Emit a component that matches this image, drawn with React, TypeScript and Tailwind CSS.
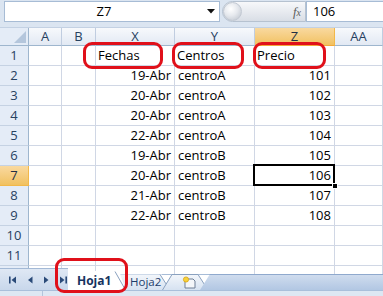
import React from "react";

const FONT = { fontFamily: '"Open Sans", "Liberation Sans", sans-serif' };

type Row = { n: number; x?: string; y?: string; z?: string; head?: boolean };

const rows: Row[] = [
  { n: 1, x: "Fechas", y: "Centros", z: "Precio", head: true },
  { n: 2, x: "19-Abr", y: "centroA", z: "101" },
  { n: 3, x: "20-Abr", y: "centroA", z: "102" },
  { n: 4, x: "20-Abr", y: "centroA", z: "103" },
  { n: 5, x: "22-Abr", y: "centroA", z: "104" },
  { n: 6, x: "19-Abr", y: "centroB", z: "105" },
  { n: 7, x: "20-Abr", y: "centroB", z: "106" },
  { n: 8, x: "21-Abr", y: "centroB", z: "107" },
  { n: 9, x: "22-Abr", y: "centroB", z: "108" },
  { n: 10 },
  { n: 11 },
];

const colHeads = ["A", "B", "X", "Y", "Z", "AA"];

function Cell({
  children,
  align = "left",
  selected = false,
}: {
  children?: React.ReactNode;
  align?: "left" | "right";
  selected?: boolean;
}) {
  return (
    <div
      className={
        "relative h-[20px] border-r border-b border-[#d0d7e5] flex items-end pb-[1px] text-[13px] leading-[17px] text-black whitespace-nowrap " +
        (align === "right" ? "justify-end pr-[3px]" : "justify-start pl-[2px]")
      }
    >
      {children}
      {selected && (
        <>
          <div className="absolute left-[-2px] top-[-2px] right-[-1px] bottom-[-1px] border-2 border-black z-10" />
          <div className="absolute right-[-4px] bottom-[-4px] w-[6px] h-[6px] bg-black border border-white z-10" />
        </>
      )}
    </div>
  );
}

function RowHead({ n, active }: { n: number; active?: boolean }) {
  return (
    <div
      className={
        "h-[20px] border-r border-b flex items-center justify-center text-[13px] " +
        (active
          ? "bg-gradient-to-b from-[#f9d99f] to-[#f1c15f] border-[#f2b84a] text-[#1f2f45]"
          : "bg-[#e4ecf7] border-r-[#9eb6ce] border-b-[#c5d2e3] text-[#27415f]")
      }
    >
      {n}
    </div>
  );
}

function NavArrow({ dir, bar }: { dir: "l" | "r"; bar?: boolean }) {
  return (
    <svg width="10" height="10" viewBox="0 0 10 10" className="shrink-0">
      {dir === "l" ? (
        <>
          {bar && <rect x="1" y="1.5" width="1.6" height="7" fill="#2a4a78" />}
          <polygon points={bar ? "8,1.5 8,8.5 3.5,5" : "7.5,1.5 7.5,8.5 3,5"} fill="#2a4a78" />
        </>
      ) : (
        <>
          <polygon points={bar ? "2,1.5 2,8.5 6.5,5" : "3,1.5 3,8.5 7.5,5"} fill="#2a4a78" />
          {bar && <rect x="7.4" y="1.5" width="1.6" height="7" fill="#2a4a78" />}
        </>
      )}
    </svg>
  );
}

export default function App() {
  return (
    <div
      className="relative w-[383px] h-[296px] overflow-hidden bg-white select-none"
      style={FONT}
    >
      {/* formula bar */}
      <div className="h-[28px] bg-[#dbe5f1] flex items-start pt-[1px] pl-[4px] border-b border-[#c3d1e3]">
        <div className="w-[216px] h-[21px] bg-white border border-[#a7bcd5] flex items-center">
          <div className="flex-1 text-center text-[13px] text-black leading-none">Z7</div>
          <div className="w-[16px] flex items-center justify-center">
            <svg width="8" height="5" viewBox="0 0 8 5">
              <polygon points="0,0 8,0 4,4.5" fill="#111" />
            </svg>
          </div>
        </div>
        <div className="ml-[2px] w-[84px] h-[21px] rounded-l-full border border-[#b6c2d0] bg-gradient-to-b from-[#f7f8fa] to-[#d9dee6] flex items-center">
          <div className="w-[19px] h-[19px] rounded-full bg-[radial-gradient(circle_at_40%_35%,#ffffff_0%,#e6e9ee_45%,#b9c0ca_100%)] border border-[#c2c9d3]" />
          <div className="flex-1" />
          <span
            className="pr-[4px] text-[13px] italic text-[#5d5d5d] leading-none"
            style={{ fontFamily: '"Liberation Serif", serif' }}
          >
            f<span className="text-[10px]">x</span>
          </span>
        </div>
        <div className="flex-1 h-[21px] bg-white border border-[#a7bcd5] border-r-0 flex items-center pl-[6px] text-[13px] text-black leading-none">
          106
        </div>
      </div>

      {/* sheet grid */}
      <div className="grid grid-cols-[29px_33px_34px_79px_80px_80px_48px]">
        {/* header row */}
        <div className="relative h-[18px] bg-[#e4ecf7] border-r border-b border-[#9eb6ce]">
          <svg className="absolute right-[2px] bottom-[2px]" width="12" height="12" viewBox="0 0 12 12">
            <polygon points="12,0 12,12 0,12" fill="#b4c6dc" />
          </svg>
        </div>
        {colHeads.map((h) => (
          <div
            key={h}
            className={
              "h-[18px] border-r border-b flex items-center justify-center text-[13px] leading-none " +
              (h === "Z"
                ? "bg-gradient-to-b from-[#f9d99f] to-[#f1c15f] border-r-[#f2b84a] border-b-[#f2a83a] text-[#1f2f45]"
                : "bg-gradient-to-b from-[#f7f9fc] to-[#e2e9f3] border-r-[#c0cde0] border-b-[#9eb6ce] text-[#27415f]")
            }
          >
            {h}
          </div>
        ))}

        {rows.map((r) => (
          <React.Fragment key={r.n}>
            <RowHead n={r.n} active={r.n === 7} />
            <Cell />
            <Cell />
            <Cell align={r.head ? "left" : "right"}>{r.x}</Cell>
            <Cell align="left">
              <span className={r.head ? "" : "pl-[1px]"}>{r.y}</span>
            </Cell>
            <Cell align={r.head ? "left" : "right"} selected={r.n === 7}>
              {r.z}
            </Cell>
            <Cell />
          </React.Fragment>
        ))}

        {/* partial row 12 */}
        <div className="h-[8px] bg-[#e4ecf7] border-r border-[#9eb6ce]" />
        <div className="h-[8px] border-r border-[#d0d7e5]" />
        <div className="h-[8px] border-r border-[#d0d7e5]" />
        <div className="h-[8px] border-r border-[#d0d7e5]" />
        <div className="h-[8px] border-r border-[#d0d7e5]" />
        <div className="h-[8px] border-r border-[#d0d7e5]" />
        <div className="h-[8px] border-r border-[#d0d7e5]" />
      </div>

      {/* sheet tabs bar */}
      <div className="relative z-10 mt-[-6px] h-[22px] flex items-end">
        <div className="w-[68px] h-[22px] bg-gradient-to-b from-[#dfe8f4] to-[#c8d7eb] border-t border-[#a3b9d6] flex items-center pl-[8px] gap-[3px]">
          <NavArrow dir="l" bar />
          <div className="w-[2px]" />
          <NavArrow dir="l" />
          <div className="w-[1px]" />
          <NavArrow dir="r" />
          <div className="w-[3px]" />
          <NavArrow dir="r" bar />
        </div>
        <div className="relative w-[58px] h-[19px] flex items-center pl-[9px]">
          <svg className="absolute inset-0" width="58" height="19" viewBox="0 0 58 19">
            <polygon points="0,0 47,0 58,19 0,19" fill="#ffffff" />
            <polyline points="47,0.5 57.5,19" fill="none" stroke="#8aa1bf" strokeWidth="1" />
          </svg>
          <span className="relative text-[12px] font-bold text-[#15325e] leading-none">Hoja1</span>
        </div>
        <div className="relative ml-[-6px] w-[52px] h-[16px] flex items-center pl-[10px]">
          <svg className="absolute inset-0" width="52" height="16" viewBox="0 0 52 16">
            <defs>
              <linearGradient id="tg" x1="0" y1="0" x2="0" y2="1">
                <stop offset="0" stopColor="#f4f7fb" />
                <stop offset="1" stopColor="#d6e2f1" />
              </linearGradient>
            </defs>
            <polygon points="0,0 40,0 50,16 6,16" fill="url(#tg)" />
            <line x1="0.5" y1="0" x2="52" y2="0" stroke="#a7bcd7" strokeWidth="1" />
            <polyline points="40,0.5 50,16" fill="none" stroke="#8aa1bf" strokeWidth="1" />
          </svg>
          <span className="relative z-10 text-[11.5px] text-[#1d3c6b] leading-none">Hoja2</span>
        </div>
        <div className="relative ml-[-10px] w-[48px] h-[16px] flex items-center pl-[20px]">
          <svg className="absolute inset-0" width="48" height="16" viewBox="0 0 48 16">
            <polygon points="0,16 10,0 36,0 46,16" fill="url(#tg)" />
            <line x1="0" y1="0.5" x2="48" y2="0.5" stroke="#a7bcd7" strokeWidth="1" />
            <polyline points="0.5,16 10,0.5 36,0.5 46,16" fill="none" stroke="#8aa1bf" strokeWidth="1" />
          </svg>
          <svg className="relative" width="14" height="13" viewBox="0 0 14 13">
            <path d="M3 3 H11 L13 5 V12 H3 Z" fill="#f4f6f9" stroke="#6f7f95" strokeWidth="1" />
            <circle cx="4" cy="3.5" r="2.6" fill="#f7d23c" stroke="#d9a514" strokeWidth="0.8" />
          </svg>
        </div>
        <div className="ml-[-10px] flex-1 h-[16px] bg-gradient-to-b from-[#cfdcee] to-[#b2c7e3] border-t border-[#8fa9cd] [clip-path:polygon(10px_0,100%_0,100%_100%,0_100%)]" />
      </div>
      <div className="h-[6px] bg-[#dde7f3] border-t border-[#a9bfdb] flex">
        <div className="w-[43px] border-r border-[#b3c5dc]" />
      </div>

      {/* red annotation outlines */}
      <div className="absolute left-[83px] top-[42px] w-[80px] h-[27px] rounded-[9px] border-[3px] border-[#e0101a] z-20" />
      <div className="absolute left-[172px] top-[42px] w-[72px] h-[27px] rounded-[9px] border-[3px] border-[#e0101a] z-20" />
      <div className="absolute left-[253px] top-[42px] w-[73px] h-[27px] rounded-[9px] border-[3px] border-[#e0101a] z-20" />
      <div className="absolute left-[55px] top-[258px] w-[73px] h-[35px] rounded-[9px] border-[3px] border-[#e0101a] z-20" />
    </div>
  );
}
